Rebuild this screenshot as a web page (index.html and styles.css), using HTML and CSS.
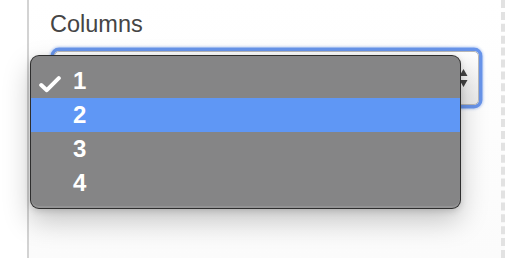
FILE: index.html
```html
<!DOCTYPE html>
<html>
<head>
<meta charset="utf-8">
<link rel="stylesheet" href="styles.css">
</head>
<body>
<div class="frame">
  <div class="field">
    <div class="label">Columns</div>
    <div class="select">
      <svg class="arrows" width="9" height="20" viewBox="0 0 9 20"><path d="M4.5 0 L8.5 7 L0.5 7 Z M0.5 11 L8.5 11 L4.5 18 Z" fill="#444"/></svg>
    </div>
  </div>
</div>
<div class="menu">
  <div class="item"><svg class="check" width="22" height="17" viewBox="0 0 22 17"><path d="M2.2 9 L7.8 14.2 L19.8 2.2" fill="none" stroke="#fff" stroke-width="4" stroke-linecap="round" stroke-linejoin="round"/></svg><span>1</span></div>
  <div class="item active"><span>2</span></div>
  <div class="item"><span>3</span></div>
  <div class="item"><span>4</span></div>
</div>
</body>
</html>
```

FILE: styles.css
```css
html, body {
  margin: 0;
  padding: 0;
  background: #fff;
}
body {
  width: 506px;
  height: 258px;
  overflow: hidden;
  position: relative;
  font-family: "Liberation Sans", Arial, sans-serif;
}
.frame {
  margin-left: 27px;
  width: 478px;
  height: 258px;
  box-sizing: border-box;
  border-left: 2px solid #d3d3d3;
  border-right: 4px dashed #e2e2e2;
  background: linear-gradient(#ffffff, #fbfbfb);
}
.field {
  padding: 11px 0 0 21px;
}
.label {
  font-size: 23.5px;
  line-height: 26px;
  color: #454545;
}
.select {
  margin: 14px 0 0 4px;
  width: 425px;
  height: 54px;
  box-sizing: border-box;
  border: 1px solid #b8b8b8;
  border-radius: 5px;
  background: linear-gradient(#ffffff, #ebebeb);
  box-shadow: 0 0 0 3.5px rgba(92, 140, 232, 0.9), 0 0 2px 5px rgba(92, 140, 232, 0.25);
  display: flex;
  align-items: center;
  justify-content: flex-end;
  padding-right: 10px;
}
.arrows {
  display: block;
  margin-top: 2px;
}
.menu {
  position: absolute;
  left: 30px;
  top: 55px;
  width: 431px;
  height: 154px;
  box-sizing: border-box;
  padding-top: 8px;
  background: #858586;
  border: 1px solid rgba(30, 30, 30, 0.85);
  border-radius: 9px;
  box-shadow: inset 0 -2px 0 rgba(255, 255, 255, 0.12), 0 12px 28px rgba(0, 0, 0, 0.22), 0 2px 6px rgba(0, 0, 0, 0.15);
  overflow: hidden;
}
.item {
  height: 34px;
  position: relative;
  display: flex;
  align-items: center;
  padding-left: 42px;
  color: #fff;
  font-size: 24px;
  font-weight: bold;
}
.item.active {
  background: #5f97f5;
}
.check {
  position: absolute;
  left: 8px;
  top: 12px;
}
```
